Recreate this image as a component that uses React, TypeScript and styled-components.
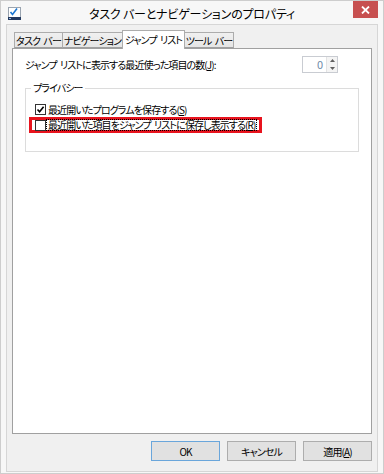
import React from "react";
import styled, { createGlobalStyle } from "styled-components";

const GlobalStyle = createGlobalStyle`
  html, body {
    margin: 0;
    padding: 0;
    background: #ffffff;
  }
  body {
    font-family: "Noto Sans CJK JP", "Noto Sans", sans-serif;
    font-size: 10px;
    letter-spacing: -0.9px;
    word-spacing: 2px;
    font-feature-settings: "palt";
    color: #000;
  }
`;

const Window = styled.div`
  width: 384px;
  height: 474px;
  box-sizing: border-box;
  border: 1px solid #cdcdcd;
  background: #f7f7f7;
  display: flex;
  flex-direction: column;
`;

const TitleBar = styled.div`
  height: 23px;
  display: grid;
  grid-template-columns: 1fr auto 1fr;
  align-items: center;
`;

const TitleIcon = styled.div`
  padding-left: 7px;
  padding-top: 1px;
  display: flex;
  align-items: center;
`;

const TitleText = styled.div`
  font-size: 12px;
  letter-spacing: -0.2px;
  word-spacing: 0;
  padding-top: 1px;
`;

const CloseButton = styled.div`
  justify-self: end;
  align-self: start;
  margin-right: 5px;
  width: 25px;
  height: 17px;
  background: #c75050;
  color: #fff;
  display: flex;
  align-items: center;
  justify-content: center;
`;

const Frame = styled.div`
  flex: 1;
  margin: 0 5px 1px 5px;
  border: 1px solid #d6d6d6;
  background: #f0f0f0;
  padding: 6px 5px 10px 5px;
  display: flex;
  flex-direction: column;
`;

const TabStrip = styled.div`
  height: 18px;
  display: flex;
  align-items: flex-end;
  padding-left: 3px;
  margin-bottom: -1px;
  position: relative;
  z-index: 1;
`;

const Tab = styled.div<{ $width: number; $active?: boolean }>`
  flex: none;
  width: ${(p) => p.$width}px;
  height: ${(p) => (p.$active ? 19 : 16)}px;
  box-sizing: border-box;
  border: 1px solid #acacac;
  border-bottom: ${(p) => (p.$active ? "none" : "1px solid #a0a0a0")};
  margin-left: -1px;
  background: ${(p) => (p.$active ? "#ffffff" : "linear-gradient(#f0f0f0, #e5e5e5)")};
  display: flex;
  align-items: center;
  justify-content: center;
  padding-bottom: ${(p) => (p.$active ? 2 : 0)}px;
  white-space: nowrap;
  overflow: hidden;
  margin-bottom: ${(p) => (p.$active ? 0 : 1)}px;
`;

const Panel = styled.div`
  flex: 1;
  background: #ffffff;
  border: 1px solid #a0a0a0;
  padding: 7px 33px 0 12px;
  display: flex;
  flex-direction: column;
`;

const CountRow = styled.div`
  height: 17px;
  display: flex;
  align-items: center;
  justify-content: space-between;
  margin-bottom: 8px;
`;

const Spinner = styled.div`
  width: 36px;
  height: 17px;
  box-sizing: border-box;
  border: 1px solid #c9ccd2;
  display: flex;
  align-items: stretch;
`;

const SpinValue = styled.div`
  flex: 1;
  text-align: right;
  padding-right: 3px;
  color: #6f8aa8;
  font-size: 11px;
  letter-spacing: 0;
  line-height: 15px;
`;

const SpinButtons = styled.div`
  width: 10px;
  display: flex;
  flex-direction: column;
  border-left: 1px solid #e3e3e3;
`;

const SpinArrow = styled.div`
  flex: 1;
  display: flex;
  align-items: center;
  justify-content: center;
  background: #f4f4f4;
`;

const GroupBox = styled.fieldset`
  margin: 0 -21px 0 0;
  padding: 0 0 18px 0;
  border: 1px solid #dcdcdc;
  min-width: 0;
`;

const Legend = styled.legend`
  margin-left: 5px;
  padding: 0 2px;
  line-height: 14px;
`;

const CheckRow = styled.label`
  height: 14px;
  display: flex;
  align-items: center;
  gap: 2px;
  padding-left: 9px;
  margin-top: 7px;
`;

const Highlight = styled.div`
  width: fit-content;
  margin-left: 3px;
  margin-top: 1px;
  border: 3px solid #e8131d;
  padding: 0 3px 0 3px;
  height: 10px;
  display: flex;
  align-items: center;
  gap: 1px;
`;

const Box = styled.span`
  width: 11px;
  height: 11px;
  box-sizing: border-box;
  border: 1px solid #333333;
  background: #fff;
  display: inline-flex;
  align-items: center;
  justify-content: center;
  flex: none;
`;

const FocusText = styled.span`
  outline: 1px dotted #000;
  outline-offset: 0;
  line-height: 10px;
  padding: 0 1px;
`;

const ButtonRow = styled.div`
  display: flex;
  justify-content: flex-end;
  gap: 7px;
  margin-top: 7px;
`;

const Button = styled.div<{ $default?: boolean }>`
  width: 69px;
  height: 20px;
  box-sizing: border-box;
  border: 1px solid ${(p) => (p.$default ? "#6aa6db" : "#adadad")};
  background: #e1e1e1;
  display: flex;
  align-items: center;
  justify-content: center;
`;

const Check = ({ checked }: { checked?: boolean }) => (
  <Box>
    {checked && (
      <svg width="9" height="9" viewBox="0 0 9 9">
        <path d="M1.5 4.5 L3.6 6.8 L7.6 1.8" stroke="#000" strokeWidth="1.6" fill="none" />
      </svg>
    )}
  </Box>
);

const AppIcon = () => (
  <svg width="13" height="13" viewBox="0 0 13 13">
    <rect x="0.5" y="0.5" width="12" height="10" fill="#fff" stroke="#9aa4b0" />
    <path d="M2.5 5 L4.5 7.5 L9 1.5" stroke="#1e78d2" strokeWidth="1.6" fill="none" />
    <rect x="0" y="10" width="13" height="3" fill="#23395f" />
    <rect x="1" y="11" width="2" height="1" fill="#8fb4e0" />
  </svg>
);

export default function App() {
  return (
    <>
      <GlobalStyle />
      <Window>
        <TitleBar>
          <TitleIcon>
            <AppIcon />
          </TitleIcon>
          <TitleText>タスク バーとナビゲーションのプロパティ</TitleText>
          <CloseButton>
            <svg width="9" height="8" viewBox="0 0 9 8">
              <path d="M1 0.5 L8 7.5 M8 0.5 L1 7.5" stroke="#fff" strokeWidth="1.8" />
            </svg>
          </CloseButton>
        </TitleBar>
        <Frame>
          <TabStrip>
            <Tab $width={49}>タスク バー</Tab>
            <Tab $width={61}>ナビゲーション</Tab>
            <Tab $width={63} $active>
              ジャンプ リスト
            </Tab>
            <Tab $width={50}>ツール バー</Tab>
          </TabStrip>
          <Panel>
            <CountRow>
              <span>
                ジャンプ リストに表示する最近使った項目の数(<u>J</u>):
              </span>
              <Spinner>
                <SpinValue>0</SpinValue>
                <SpinButtons>
                  <SpinArrow>
                    <svg width="5" height="3" viewBox="0 0 5 3">
                      <path d="M0 3 L2.5 0 L5 3 Z" fill="#606060" />
                    </svg>
                  </SpinArrow>
                  <SpinArrow>
                    <svg width="5" height="3" viewBox="0 0 5 3">
                      <path d="M0 0 L2.5 3 L5 0 Z" fill="#606060" />
                    </svg>
                  </SpinArrow>
                </SpinButtons>
              </Spinner>
            </CountRow>
            <GroupBox>
              <Legend>プライバシー</Legend>
              <CheckRow>
                <Check checked />
                <span>
                  最近開いたプログラムを保存する(<u>S</u>)
                </span>
              </CheckRow>
              <Highlight>
                <Check />
                <FocusText>
                  最近開いた項目をジャンプ リストに保存し表示する(<u>R</u>)
                </FocusText>
              </Highlight>
            </GroupBox>
          </Panel>
          <ButtonRow>
            <Button $default>OK</Button>
            <Button>キャンセル</Button>
            <Button>
              適用(<u>A</u>)
            </Button>
          </ButtonRow>
        </Frame>
      </Window>
    </>
  );
}
